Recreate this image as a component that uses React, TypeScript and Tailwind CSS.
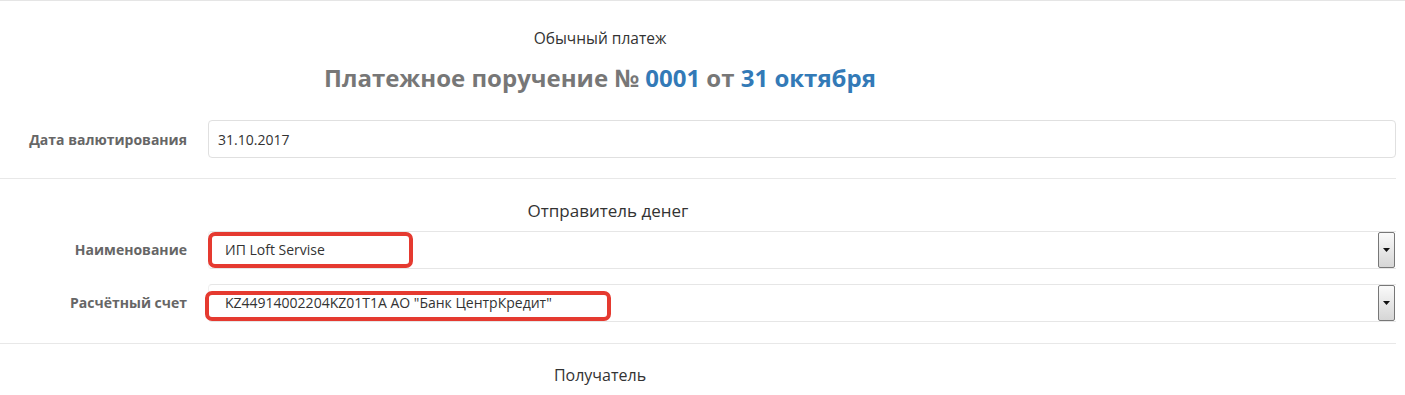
import React from 'react'

const font = { fontFamily: '"Open Sans", "Noto Sans", sans-serif' }

function Label({ children }: { children: React.ReactNode }) {
  return (
    <div className="w-[208px] shrink-0 pr-[21px] text-right text-[14px] font-bold text-[#666]">
      {children}
    </div>
  )
}

function SelectBox({ value, hl }: { value: string; hl: string }) {
  return (
    <div className="relative flex h-[38px] flex-1 items-center rounded-l-[4px] border-y border-l border-[#e6e6e6] border-l-[#f0f0f0]">
      <div className={`absolute bottom-0 rounded-[7px] border-[4px] border-[#e53a30] ${hl}`} />
      <span className="relative pl-[16px] text-[14px] text-[#333]">{value}</span>
      <div className="absolute right-[1px] top-0 bottom-0 flex w-[17px] items-center justify-center rounded-[2px] border border-[#777] bg-gradient-to-b from-[#fafafa] to-[#d6d6d6]">
        <svg width="7" height="4" viewBox="0 0 7 4">
          <path d="M0 0h7L3.5 4z" fill="#111" />
        </svg>
      </div>
    </div>
  )
}

export default function App() {
  return (
    <div className="h-[395px] w-[1405px] overflow-hidden bg-white" style={font}>
      <div className="border-t border-[#e5e5e5]" />
      <div className="w-[1200px] pt-[26px] text-center text-[15.5px] text-[#333]">Обычный платеж</div>
      <div className="w-[1200px] pt-[10px] text-center text-[24px] font-bold text-[#777]">
        Платежное поручение № <span className="text-[#337ab7]">0001</span> от{' '}
        <span className="text-[#337ab7]">31 октября</span>
      </div>

      <div className="flex items-center pr-[9px] pt-[24px]">
        <Label>Дата валютирования</Label>
        <div className="flex h-[38px] flex-1 items-center rounded-[4px] border border-[#e0e0e0] pl-[9px] text-[14px] text-[#333]">
          31.10.2017
        </div>
      </div>

      <div className="mr-[9px] mt-[20px] border-t border-[#e8e8e8]" />

      <div className="w-[1200px] pt-[19px] pl-[16px] text-center text-[17px] text-[#333]">Отправитель денег</div>

      <div className="flex flex-col gap-[15px] pr-[9px] pt-[7px]">
        <div className="flex items-center">
          <Label>Наименование</Label>
          <SelectBox value="ИП Loft Servise" hl="-left-[1px] top-0 w-[205px]" />
        </div>
        <div className="flex items-center">
          <Label>Расчётный счет</Label>
          <SelectBox value={'KZ44914002204KZ01T1A АО "Банк ЦентрКредит"'} hl="-left-[4px] top-[6px] w-[406px]" />
        </div>
      </div>

      <div className="mr-[9px] mt-[21px] border-t border-[#e8e8e8]" />

      <div className="w-[1200px] pt-[19px] text-center text-[16px] text-[#333]">Получатель</div>
    </div>
  )
}
